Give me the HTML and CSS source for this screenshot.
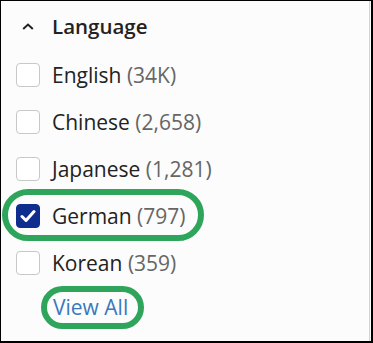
FILE: index.html
```html
<!DOCTYPE html>
<html>
<head>
<meta charset="utf-8">
<link rel="stylesheet" href="styles.css">
</head>
<body>
<div class="frame">
  <div class="sidebar">
    <div class="header">
      <svg class="chev" width="12" height="7" viewBox="0 0 12 7"><path d="M1.2 6 L6 1.5 L10.8 6" fill="none" stroke="#222" stroke-width="2"/></svg>
      <span class="title">Language</span>
    </div>
    <div class="row"><span class="box"></span><span class="label">English <span class="count">(34K)</span></span></div>
    <div class="row"><span class="box"></span><span class="label">Chinese <span class="count">(2,658)</span></span></div>
    <div class="row"><span class="box"></span><span class="label">Japanese <span class="count">(1,281)</span></span></div>
    <div class="row ring-german"><span class="box checked"><svg width="16" height="14" viewBox="0 0 16 14"><path d="M2 7.5 L6 11.5 L14 2.5" fill="none" stroke="#fff" stroke-width="3" stroke-linecap="round" stroke-linejoin="round"/></svg></span><span class="label">German <span class="count">(797)</span></span></div>
    <div class="row"><span class="box"></span><span class="label">Korean <span class="count">(359)</span></span></div>
    <div class="viewall"><a class="link">View All</a></div>
  </div>
</div>
</body>
</html>
```
FILE: styles.css
```css
html, body {
  margin: 0;
  padding: 0;
  background: #fcfcfc;
}
.frame {
  width: 373px;
  height: 343px;
  box-sizing: border-box;
  border-top: 1px solid #000;
  border-left: 1px solid #000;
  border-right: 2px solid #000;
  border-bottom: 2px solid #000;
  font-family: "Open Sans", "Noto Sans", sans-serif;
}
.sidebar {
  width: 369px;
  height: 100%;
  box-sizing: border-box;
  border-right: 1px solid #d4d4d4;
  padding-left: 15px;
}
.header {
  height: 50px;
  display: flex;
  align-items: center;
  padding-left: 6px;
  gap: 18px;
}
.chev {
  display: block;
}
.title {
  font-size: 20.5px;
  font-weight: 600;
  color: #222;
}
.row {
  position: relative;
  height: 47px;
  display: flex;
  align-items: center;
  gap: 12px;
}
.box {
  width: 24px;
  height: 24px;
  box-sizing: border-box;
  border: 1px solid #c8c8c8;
  border-radius: 4px;
  background: #fff;
  display: flex;
  align-items: center;
  justify-content: center;
}
.box.checked {
  background: #0f2d8e;
  border-color: #0f2d8e;
}
.label {
  font-size: 21px;
  color: #222;
}
.count {
  color: #666;
}
.ring-german::before {
  content: "";
  position: absolute;
  left: -14px;
  top: -3px;
  width: 202px;
  height: 52px;
  box-sizing: border-box;
  border: 6px solid #2ea55b;
  border-radius: 26px;
}
.viewall {
  height: 42px;
  display: flex;
  align-items: center;
  padding-left: 37px;
}
.link {
  position: relative;
  font-size: 21px;
  color: #3878bd;
}
.link::before {
  content: "";
  position: absolute;
  left: -12px;
  top: -7px;
  right: -16px;
  bottom: -8px;
  border: 6px solid #2ea55b;
  border-radius: 24px;
}
```
